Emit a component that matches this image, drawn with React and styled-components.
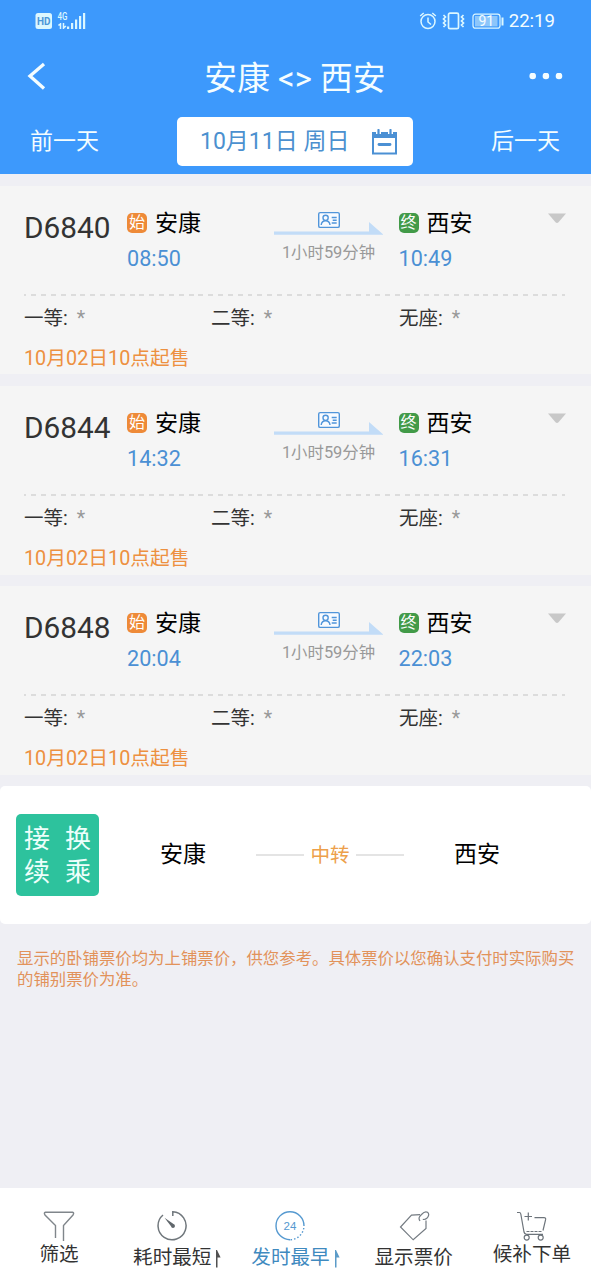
import React from "react";
import styled, { createGlobalStyle, css } from "styled-components";

const GlobalStyle = createGlobalStyle`
  * {
    box-sizing: border-box;
  }

  body {
    margin: 0;
    background-color: #efeff4;
    font-family: Roboto, "Noto Sans CJK SC", sans-serif;
    color: #333;
  }
`;

const StyledPage = styled.div`
  display: flex;
  flex-direction: column;
  width: 591px;
  height: 1280px;
  overflow: hidden;
`;

const StyledHeader = styled.header`
  height: 174px;
  flex-shrink: 0;
  background-color: #3d99fc;
  color: #f4fdff;
`;

const StyledStatusBar = styled.div`
  display: flex;
  align-items: center;
  justify-content: space-between;
  height: 41px;
  padding: 0 36px 0 35px;
`;

const StyledStatusGroup = styled.div`
  display: flex;
  align-items: center;
`;

const StyledClock = styled.span`
  margin-left: 5px;
  font-size: 18.6px;
  line-height: 22px;
`;

const StyledTitleRow = styled.div`
  display: grid;
  grid-template-columns: 34px 1fr 34px;
  align-items: center;
  height: 72px;
  padding: 0 28px 0 27px;
`;

const StyledTitle = styled.h1`
  margin: 0;
  padding-top: 3px;
  font-size: 32.8px;
  font-weight: 400;
  line-height: 40px;
  text-align: center;
`;

const StyledDayRow = styled.div`
  display: flex;
  align-items: center;
  justify-content: space-between;
  height: 56px;
  padding: 0 31px 0 30px;
  font-size: 23px;
  line-height: 30px;

  > span {
    padding-top: 2px;
  }
`;

const StyledDate = styled.div`
  display: flex;
  align-items: center;
  justify-content: space-between;
  width: 236px;
  height: 49px;
  padding: 1px 15px 0 23px;
  border-radius: 5px;
  background-color: #fff;
  color: #4b90cf;
  font-size: 23px;
  white-space: nowrap;
`;

const StyledList = styled.main`
  display: flex;
  flex-direction: column;
  flex: 1;
  gap: 11.4px;
  padding-top: 11.6px;
`;

const StyledTrain = styled.article`
  height: 188.8px;
  padding: 0 25px 0 24px;
  background-color: #f5f5f5;
`;

const StyledTrainMain = styled.div`
  display: grid;
  grid-template-columns: 103px 147px 124.5px 149.5px 18px;
  height: 108.5px;
  padding-top: 24px;
`;

const StyledCode = styled.div`
  font-size: 29.8px;
  line-height: 36px;
`;

const StyledStop = styled.div`
  display: flex;
  flex-direction: column;
`;

const StyledStation = styled.div`
  display: flex;
  align-items: center;
  gap: 7px;
  height: 28px;
  padding-top: 1px;
  color: #000;
  font-size: 23px;
  line-height: 28px;
`;

const StyledBadge = styled.span`
  width: 20px;
  height: 20px;
  margin: -2px 1px 0 0;
  border-radius: 5px;
  background-color: ${(props) => (props.$end ? "#429a48" : "#ee8a38")};
  color: #fff;
  font-size: 16px;
  line-height: 20px;
  text-align: center;
`;

const StyledTime = styled.div`
  margin-top: 8px;
  color: #4b90d4;
  font-size: 21.6px;
  line-height: 26px;
`;

const StyledTrip = styled.div`
  display: flex;
  flex-direction: column;
  align-items: center;
  width: 109px;
  color: #999;
  font-size: 16.4px;
  line-height: 22px;

  svg {
    flex-shrink: 0;
  }
`;

const StyledDash = styled.div`
  height: 2px;
  margin-right: 1px;
  background: repeating-linear-gradient(
    to right,
    #dcdcdc 0 2.4px,
    transparent 2.4px 7.3px,
    #dcdcdc 7.3px 9.83px
  );
`;

const StyledSeats = styled.div`
  display: grid;
  grid-template-columns: 187px 188px 1fr;
  padding-top: 10px;
  font-size: 19.5px;
  line-height: 26px;

  span {
    margin-left: 9px;
    color: #999;
  }
`;

const StyledSale = styled.div`
  margin-top: 14px;
  color: #ed9040;
  font-size: 19.8px;
  line-height: 26px;
`;

const StyledTransfer = styled.section`
  display: flex;
  align-items: center;
  height: 138px;
  padding-left: 16px;
  border-radius: 5px;
  background-color: #fff;
  color: #000;
  font-size: 23px;
  line-height: 30px;
`;

const StyledTransferTag = styled.div`
  display: grid;
  grid-template-columns: 26px 26px;
  justify-content: space-between;
  align-content: center;
  width: 83px;
  height: 82px;
  margin-right: 61px;
  padding: 2px 8px 0;
  border-radius: 5px;
  background-color: #2dc29d;
  color: #edfffb;
  font-size: 26px;
  line-height: 33px;
`;

const StyledVia = styled.div`
  display: flex;
  align-items: center;
  justify-content: space-between;
  width: 148px;
  margin: 0 50px;
  color: #eda04a;
  font-size: 19.6px;

  span {
    padding-top: 2px;
  }

  &::before,
  &::after {
    content: "";
    width: 48px;
    height: 2px;
    background-color: #e4e4e4;
  }
`;

const StyledNote = styled.p`
  margin: 12px 0 0;
  padding: 0 16px 0 17px;
  color: #e2925a;
  font-size: 16.4px;
  line-height: 21.6px;
`;

const StyledTabs = styled.nav`
  display: grid;
  grid-template-columns: repeat(5, 1fr);
  height: 92px;
  flex-shrink: 0;
  background-color: #fff;
`;

const StyledTab = styled.div`
  display: flex;
  flex-direction: column;
  align-items: center;
  padding-top: 22px;
  color: #333;
  font-size: 19.6px;
  line-height: 26px;

  ${(props) =>
    props.$active &&
    css`
      color: #3f8abf;
    `}

  > svg {
    margin-right: ${(props) => (props.$sorted ? "10px" : 0)};
  }
`;

const StyledTabLabel = styled.div`
  display: flex;
  align-items: center;
  gap: 5px;
  margin-top: ${(props) => (props.$low ? "4px" : "1px")};
`;

function SignalIcons() {
  return (
    <svg width="52" height="20" viewBox="0 0 52 20" fill="#dcf7ff">
      <rect x="0.5" y="2" width="16.5" height="16" rx="2.5" />
      <text x="8.8" y="14" fontSize="11" fontWeight="700" textLength="13.5" lengthAdjust="spacingAndGlyphs" textAnchor="middle" fill="#4b96d8">
        HD
      </text>
      <text x="22.5" y="9" fontSize="10" fontWeight="500" textLength="10" lengthAdjust="spacingAndGlyphs">
        4G
      </text>
      <path d="M25.500 12v6M23.500 14.500l2-2M28.500 12v6M28.500 17l2.500-2" stroke="#dcf7ff" strokeWidth="1.5" fill="none" />
      <path d="M32 15.500h2.200V18H32zM36 12h2.200v6H36zM40 8.500h2.200V18H40zM44 5h2.200v13H44zM48 2h2.200v16H48z" />
    </svg>
  );
}

function DeviceIcons() {
  return (
    <svg width="86" height="20" viewBox="0 0 86 20" fill="none" stroke="#dcf7ff" strokeWidth="1.5">
      <g transform="translate(1 -.5)">
        <circle cx="9" cy="11" r="7" />
        <path d="M9 7v4.500l3 2.500M1.200 5.500l3.500-3M16.800 5.500l-3.500-3" />
        <rect x="29.500" y="2.700" width="10" height="15.500" rx="1.500" strokeWidth="1.700" />
        <path
          d="M24.500 4.500l2 2-2 2 2 2-2 2 2 2-2 2M44.500 4.500l-2 2 2 2-2 2 2 2-2 2 2 2"
          strokeWidth="1.700"
        />
        <rect x="54" y="3.700" width="27" height="14" rx="2.500" strokeWidth="1.200" />
        <rect x="56" y="5.500" width="22.500" height="10.400" fill="#8cc6fb" stroke="none" />
        <path d="M83.500 7v8" strokeWidth="2" />
        <text x="67.300" y="15.500" fontSize="14" textAnchor="middle" fill="#f4fdff" stroke="none">
          91
        </text>
      </g>
    </svg>
  );
}

function BackIcon() {
  return (
    <svg width="20" height="30" viewBox="0 0 20 30" fill="none" stroke="#f4fdff" strokeWidth="3.300">
      <path d="M17 2 3 14l14 12.500" />
    </svg>
  );
}

function MoreIcon() {
  return (
    <svg width="34" height="8" viewBox="0 0 34 8" fill="#f4fdff">
      <circle cx="3.700" cy="3" r="3.300" />
      <circle cx="16.900" cy="3" r="3.300" />
      <circle cx="30" cy="3" r="3.300" />
    </svg>
  );
}

function CalendarIcon() {
  return (
    <svg width="27" height="26" viewBox="0 0 27 26">
      <rect x="2" y="4" width="23" height="20.500" fill="none" stroke="#4b90d4" strokeWidth="2" />
      <path d="M1 3h25v6H1z" fill="#4b90d4" />
      <path d="M7.500 0v5M19.500 0v5" stroke="#fff" strokeWidth="5" />
      <path d="M7.500 1v5M19.500 1v5" stroke="#4b90d4" strokeWidth="2.200" strokeLinecap="round" />
      <path d="M8 15.500h11" stroke="#4b90d4" strokeWidth="2.800" strokeLinecap="round" />
    </svg>
  );
}

function TripArrow() {
  return (
    <svg width="109" height="32" viewBox="0 0 109 32">
      <path d="M0 21.500h95V12l14.500 12.700H0z" fill="#c2dcf7" />
      <rect x="44.700" y="2.600" width="20.600" height="14.800" rx="1.500" fill="#f8fbff" stroke="#5095da" strokeWidth="1.400" />
      <g fill="none" stroke="#5095da" strokeWidth="1.400">
        <circle cx="51.600" cy="7.800" r="2.600" />
        <path d="M47.200 15c.3-3 2-4.300 4.400-4.300s4.100 1.300 4.400 4.300M57.700 7.500h5M58.700 10.300h4M57.700 13h5" />
      </g>
    </svg>
  );
}

function DownIcon() {
  return (
    <svg width="18" height="18" viewBox="0 0 18 18">
      <path d="M0 3.500h18L10.500 12.300q-1.500 1.600-3 0z" fill="#c8c8c8" />
    </svg>
  );
}

function FilterIcon() {
  return (
    <svg width="32" height="31" viewBox="0 0 32 31" fill="none" stroke="#80868b" strokeWidth="1.400">
      <path d="M12.500 28V15.500L2 5q-1.500-2.200.5-2.700h27q2 .5.500 2.700L20.500 15.500V31" />
    </svg>
  );
}

function TimerIcon() {
  return (
    <svg width="32" height="31" viewBox="0 0 32 31" fill="none" stroke="#70777c" strokeWidth="1.500">
      <path d="M16.800 6V1.700A14 14 0 1 1 7 5" />
      <path d="M8.500 7.800l9 6.200a2 2 0 1 1-2.500 2.300z" fill="#60676c" stroke="none" />
    </svg>
  );
}

function DayIcon() {
  return (
    <svg width="32" height="31" viewBox="0 0 32 31" fill="none" stroke="#5599d0" strokeWidth="1.400">
      <path d="M16.500 29.700A14 14 0 1 1 30 16" />
      <path d="M29.800 18A14 14 0 0 1 17 29.700" strokeDasharray="1.500 2" />
      <text
        x="16"
        y="19.800"
        fontSize="11.500"
        fontFamily="Liberation Sans, sans-serif"
        textAnchor="middle"
        fill="#5599d0"
        stroke="none"
      >
        24
      </text>
    </svg>
  );
}

function TagIcon() {
  return (
    <svg width="32" height="31" viewBox="0 0 32 31" fill="none" stroke="#747b82" strokeWidth="1.200">
      <path d="M22 4.700 13.500 5.200 2.500 17 15.200 29.800 28 18.500V10.500" />
      <path d="M22 11c-2-3-.5-4.500 1.500-6.500 2-2.200 4-3.500 6-2.200 2 1.500 1.300 4-.7 6-1.500 1.300-2.500 1.500-4 1" />
    </svg>
  );
}

function CartIcon() {
  return (
    <svg width="32" height="31" viewBox="0 0 32 31" fill="none" stroke="#6d747b" strokeWidth="1.200">
      <path d="M1 2.500h2.500q1 0 1.300 1.500L8 22q.5 2.300 2.500 2.300h16.500M18.500 7.700h9.500q2 0 1.600 2L27 20.500" />
      <path d="M10.500 21.500h15" strokeDasharray="3 1" />
      <path d="M8.500 6.500h7.500M12.300 2.500v8" />
      <circle cx="10.700" cy="27.600" r="2.500" />
      <circle cx="24.700" cy="27.600" r="2.500" />
    </svg>
  );
}

function SortArrow() {
  return (
    <svg width="5" height="19" viewBox="0 0 5 19" opacity="0.85">
      <path d="M0 1h1L4.600 8.500H1.500v10H0z" fill="currentColor" />
    </svg>
  );
}

const trains = [
  { code: "D6840", depart: "08:50", arrive: "10:49" },
  { code: "D6844", depart: "14:32", arrive: "16:31" },
  { code: "D6848", depart: "20:04", arrive: "22:03" },
];

const tabs = [
  { label: "筛选", icon: <FilterIcon /> },
  { label: "耗时最短", icon: <TimerIcon />, sorted: true, low: true },
  { label: "发时最早", icon: <DayIcon />, sorted: true, low: true, active: true },
  { label: "显示票价", icon: <TagIcon />, low: true },
  { label: "候补下单", icon: <CartIcon /> },
];

function Train({ train }) {
  return (
    <StyledTrain>
      <StyledTrainMain>
        <StyledCode>{train.code}</StyledCode>
        <StyledStop>
          <StyledStation>
            <StyledBadge>始</StyledBadge>安康
          </StyledStation>
          <StyledTime>{train.depart}</StyledTime>
        </StyledStop>
        <StyledTrip>
          <TripArrow />
          1小时59分钟
        </StyledTrip>
        <StyledStop>
          <StyledStation>
            <StyledBadge $end>终</StyledBadge>西安
          </StyledStation>
          <StyledTime>{train.arrive}</StyledTime>
        </StyledStop>
        <DownIcon />
      </StyledTrainMain>
      <StyledDash />
      <StyledSeats>
        <div>
          一等:<span>*</span>
        </div>
        <div>
          二等:<span>*</span>
        </div>
        <div>
          无座:<span>*</span>
        </div>
      </StyledSeats>
      <StyledSale>10月02日10点起售</StyledSale>
    </StyledTrain>
  );
}

export default function App() {
  return (
    <StyledPage>
      <GlobalStyle />
      <StyledHeader>
        <StyledStatusBar>
          <SignalIcons />
          <StyledStatusGroup>
            <DeviceIcons />
            <StyledClock>22:19</StyledClock>
          </StyledStatusGroup>
        </StyledStatusBar>
        <StyledTitleRow>
          <BackIcon />
          <StyledTitle>安康 &lt;&gt; 西安</StyledTitle>
          <MoreIcon />
        </StyledTitleRow>
        <StyledDayRow>
          <span>前一天</span>
          <StyledDate>
            10月11日 周日
            <CalendarIcon />
          </StyledDate>
          <span>后一天</span>
        </StyledDayRow>
      </StyledHeader>
      <StyledList>
        {trains.map((train) => (
          <Train key={train.code} train={train} />
        ))}
        <StyledTransfer>
          <StyledTransferTag>
            <span>接</span>
            <span>换</span>
            <span>续</span>
            <span>乘</span>
          </StyledTransferTag>
          安康
          <StyledVia>
            <span>中转</span>
          </StyledVia>
          西安
        </StyledTransfer>
        <StyledNote>
          显示的卧铺票价均为上铺票价，供您参考。具体票价以您确认支付时实际购买的铺别票价为准。
        </StyledNote>
      </StyledList>
      <StyledTabs>
        {tabs.map((tab) => (
          <StyledTab key={tab.label} $active={tab.active} $sorted={tab.sorted}>
            {tab.icon}
            <StyledTabLabel $low={tab.low}>
              {tab.label}
              {tab.sorted && <SortArrow />}
            </StyledTabLabel>
          </StyledTab>
        ))}
      </StyledTabs>
    </StyledPage>
  );
}
